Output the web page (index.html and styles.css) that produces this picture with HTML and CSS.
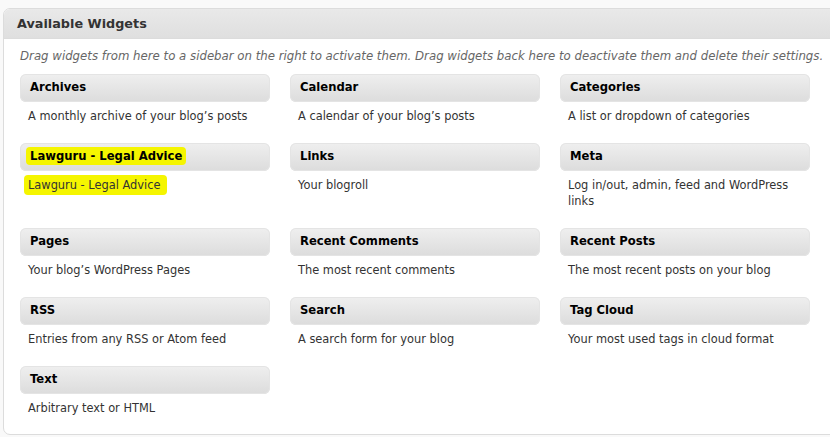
FILE: index.html
```html
<!DOCTYPE html>
<html>
<head>
<meta charset="utf-8">
<link rel="stylesheet" href="styles.css">
</head>
<body>
<div class="panel">
  <div class="panel-head">Available Widgets</div>
  <div class="panel-body">
    <p class="intro">Drag widgets from here to a sidebar on the right to activate them. Drag widgets back here to deactivate them and delete their settings.</p>
    <div class="grid">
      <div class="widget"><div class="w-title">Archives</div><div class="w-desc">A monthly archive of your blog’s posts</div></div>
      <div class="widget"><div class="w-title">Calendar</div><div class="w-desc">A calendar of your blog’s posts</div></div>
      <div class="widget"><div class="w-title">Categories</div><div class="w-desc">A list or dropdown of categories</div></div>
      <div class="widget"><div class="w-title"><span class="hl hl-title">Lawguru - Legal Advice</span></div><div class="w-desc"><span class="hl hl-desc">Lawguru - Legal Advice</span></div></div>
      <div class="widget"><div class="w-title">Links</div><div class="w-desc">Your blogroll</div></div>
      <div class="widget"><div class="w-title">Meta</div><div class="w-desc">Log in/out, admin, feed and WordPress links</div></div>
      <div class="widget"><div class="w-title">Pages</div><div class="w-desc">Your blog’s WordPress Pages</div></div>
      <div class="widget"><div class="w-title">Recent Comments</div><div class="w-desc">The most recent comments</div></div>
      <div class="widget"><div class="w-title">Recent Posts</div><div class="w-desc">The most recent posts on your blog</div></div>
      <div class="widget"><div class="w-title">RSS</div><div class="w-desc">Entries from any RSS or Atom feed</div></div>
      <div class="widget"><div class="w-title">Search</div><div class="w-desc">A search form for your blog</div></div>
      <div class="widget"><div class="w-title">Tag Cloud</div><div class="w-desc">Your most used tags in cloud format</div></div>
      <div class="widget"><div class="w-title">Text</div><div class="w-desc">Arbitrary text or HTML</div></div>
    </div>
  </div>
</div>
</body>
</html>
```

FILE: styles.css
```css
html, body {
  margin: 0;
  padding: 0;
}
body {
  background: #f9f9f9;
  font-family: "DejaVu Sans", Verdana, sans-serif;
  color: #333;
  width: 830px;
  height: 437px;
  overflow: hidden;
  padding: 8px 0 0 3px;
  box-sizing: border-box;
}
.panel {
  width: 860px;
  height: 427px;
  box-sizing: border-box;
  border: 1px solid #dcdcdc;
  border-radius: 7px;
  background: #fff;
  overflow: hidden;
}
.panel-head {
  height: 30px;
  box-sizing: border-box;
  padding: 7px 0 0 13px;
  background: linear-gradient(#e9e9e9, #dfdfdf);
  border-bottom: 1px solid #dcdcdc;
  font-weight: bold;
  font-size: 12.8px;
  color: #333;
}
.panel-body {
  padding: 0 0 0 16px;
}
.intro {
  margin: 10px 0 0 0;
  font-style: italic;
  font-size: 11.75px;
  color: #666;
  white-space: nowrap;
}
.grid {
  display: grid;
  grid-template-columns: repeat(3, 250px);
  column-gap: 20px;
  margin-top: 11px;
}
.widget {
  padding-bottom: 19px;
}
.w-title {
  height: 28px;
  box-sizing: border-box;
  border-radius: 6px;
  background: linear-gradient(#efefef, #dcdcdc);
  box-shadow: inset 0 0 0 1px #e4e4e4;
  padding: 6px 0 0 10px;
  font-weight: bold;
  font-size: 11.6px;
  color: #000;
}
.w-desc {
  margin-top: 6px;
  padding-left: 8px;
  padding-right: 8px;
  font-size: 11.4px;
  line-height: 16px;
  color: #333;
}
.hl {
  background: #f5f500;
  border-radius: 4px;
}
.hl-title {
  margin-left: -4px;
  padding: 2px 4px 2px 4px;
}
.hl-desc {
  margin-left: -4px;
  padding: 3px 6px 3px 4px;
}
```
